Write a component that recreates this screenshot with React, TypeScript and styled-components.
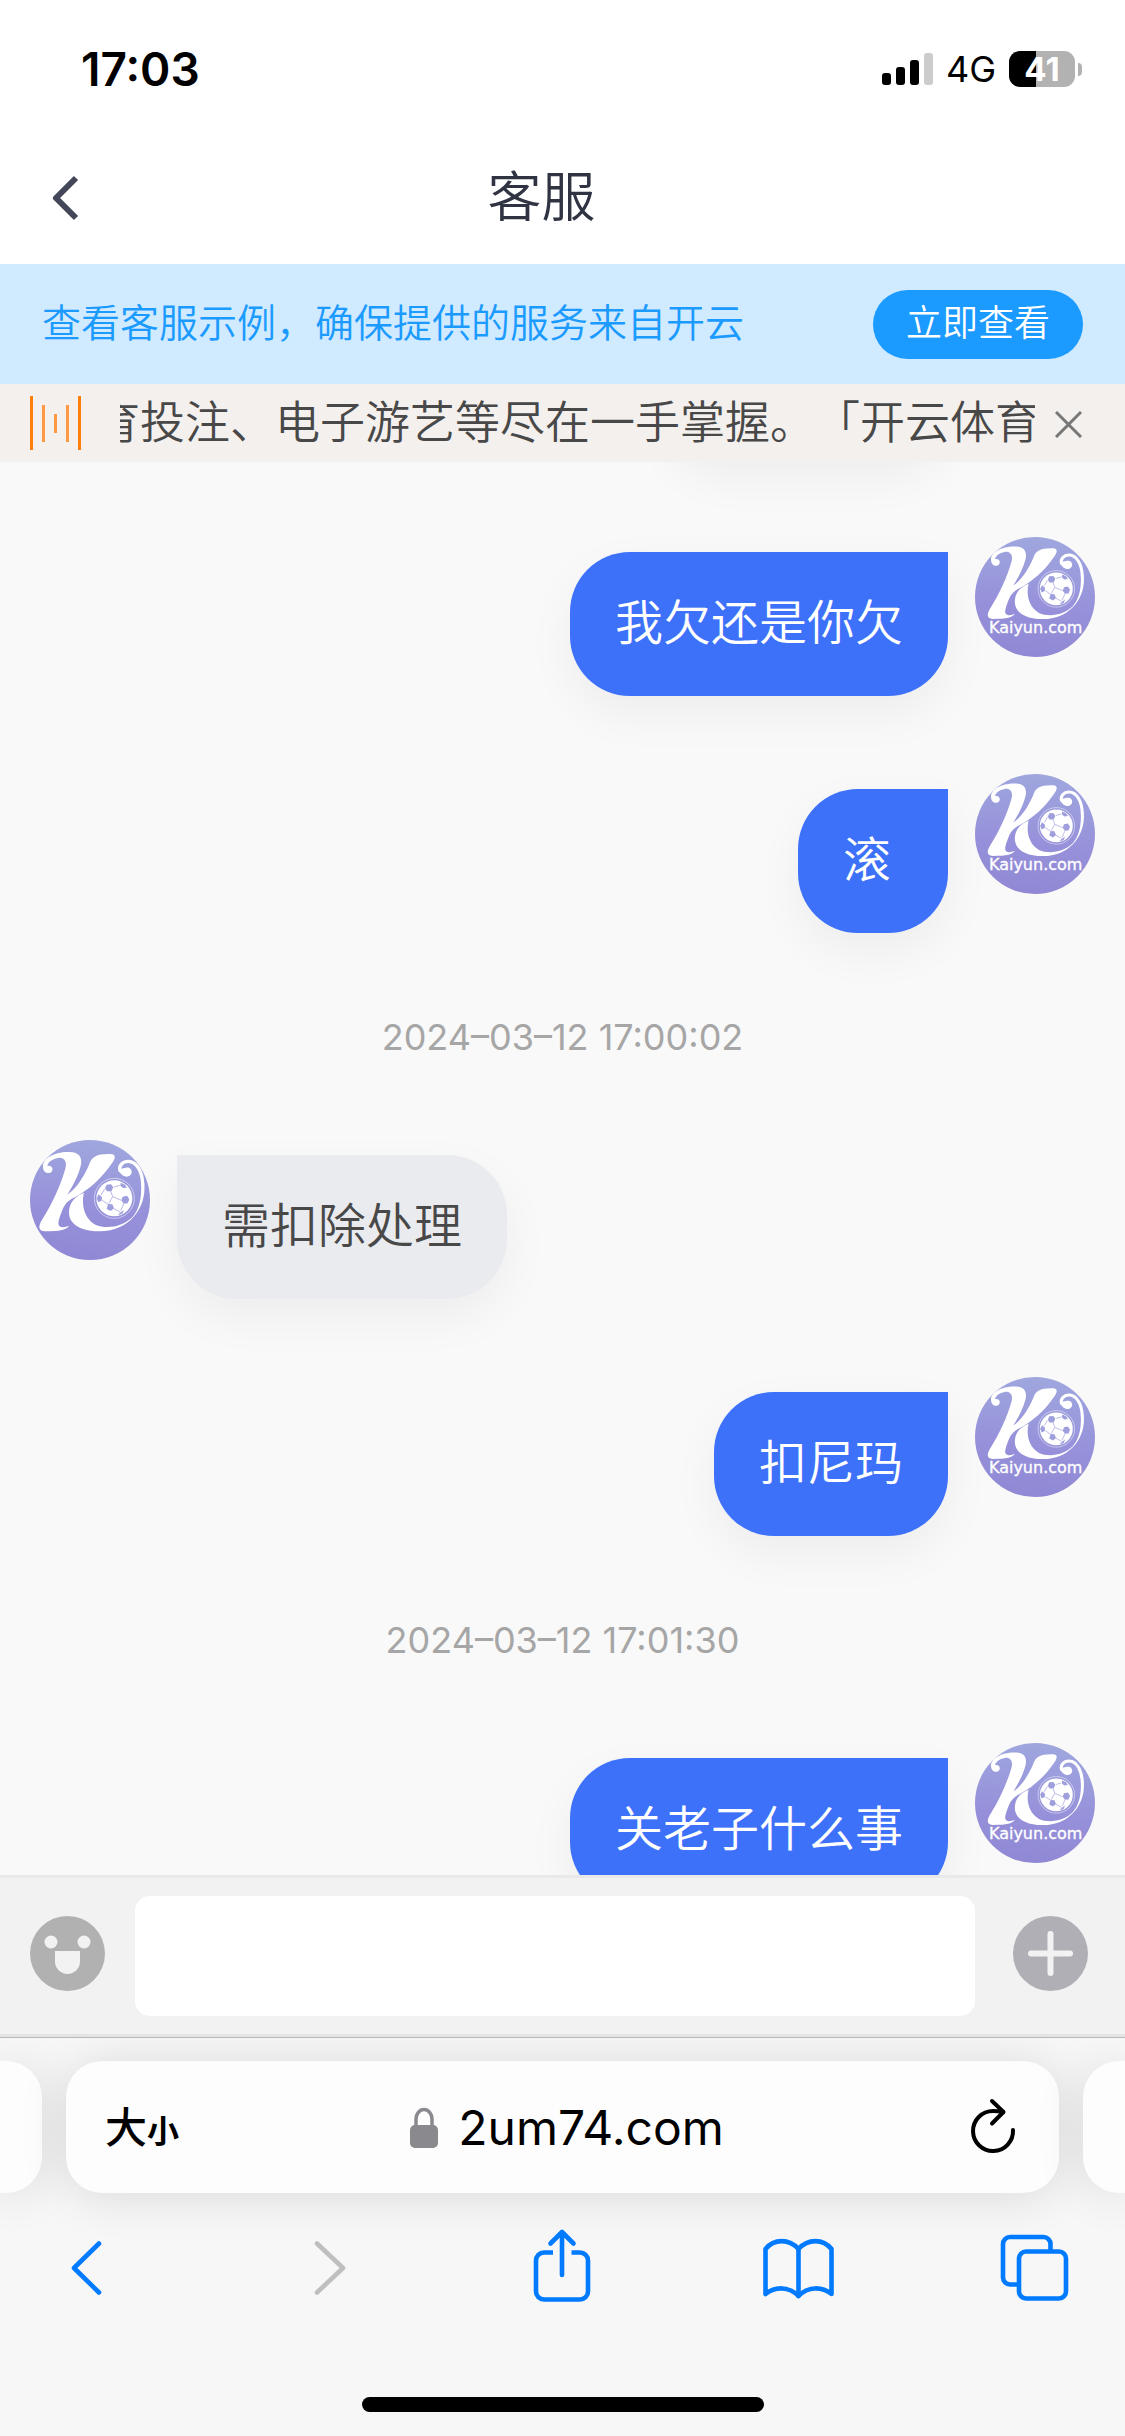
import React from 'react';
import styled, { createGlobalStyle } from 'styled-components';

const GlobalStyle = createGlobalStyle`
  * { box-sizing: border-box; }
  body {
    margin: 0;
    background: #f7f7f7;
    font-family: Inter, "Noto Sans CJK SC", sans-serif;
    text-spacing-trim: space-all;
  }
  button, input { font: inherit; color: inherit; }
  svg { display: block; flex: none; }
`;

const Screen = styled.div`
  display: flex;
  flex-direction: column;
  height: 100vh;
  overflow: hidden;
`;

const PlainButton = styled.button`
  display: flex;
  align-items: center;
  justify-content: center;
  padding: 0;
  border: 0;
  background: none;
  cursor: pointer;
`;

/* Status bar */

const StatusBar = styled.div`
  display: flex;
  justify-content: space-between;
  align-items: center;
  height: 132px;
  padding: 6px 43px 0 81px;
  background: #fff;
  color: #000;
`;

const Clock = styled.time`
  font-size: 46px;
  line-height: 60px;
  font-weight: 600;
`;

const StatusIcons = styled.div`
  display: flex;
  align-items: center;
  gap: 13px;
`;

const Network = styled.span`
  font-size: 36px;
  line-height: 48px;
`;

const Battery = styled.div`
  display: flex;
  align-items: center;
  gap: 3px;
`;

const BatteryBody = styled.div<{ $level: number }>`
  width: 66px;
  height: 36px;
  border-radius: 11px;
  background: linear-gradient(90deg, #000 ${(p) => p.$level}%, #b2b2b2 ${(p) => p.$level}%);
  color: #fff;
  font-size: 33px;
  line-height: 36px;
  font-weight: 700;
  text-align: center;
`;

const BatteryCap = styled.div`
  width: 4px;
  height: 13px;
  border-radius: 0 4px 4px 0;
  background: #b2b2b2;
`;

/* Page header */

const Header = styled.header`
  display: grid;
  grid-template-columns: 96px 1fr 138px;
  align-items: center;
  height: 132px;
  background: #fff;
  color: #2f3342;
`;

const BackButton = styled(PlainButton)`
  height: 96px;
  padding-left: 36px;
`;

const Title = styled.h1`
  margin: 0;
  text-align: center;
  font-size: 54px;
  line-height: 80px;
  font-weight: 350;
`;

/* Notices */

const ServiceNotice = styled.div`
  display: flex;
  align-items: center;
  justify-content: space-between;
  height: 120px;
  padding: 0 42px;
  background: #d0eaff;
  color: #1b9aff;
  font-size: 39px;
  line-height: 57px;
  font-weight: 350;
`;

const NoticeText = styled.span`
  padding-bottom: 4px;
`;

const ViewButton = styled.button`
  height: 69px;
  padding: 0 33px 2px;
  border: 0;
  border-radius: 35px;
  background: #1b9aff;
  color: #fff;
  font-size: 36px;
  line-height: 54px;
  cursor: pointer;
`;

const Ticker = styled.div`
  display: flex;
  align-items: center;
  height: 78px;
  padding: 0 30px;
  background: #f4f0ee;
  color: #484848;
`;

const TickerWindow = styled.div`
  display: flex;
  flex: 1;
  justify-content: flex-end;
  min-width: 0;
  margin-left: 39px;
  overflow: hidden;
`;

const TickerText = styled.span`
  flex: none;
  margin-right: -5px;
  white-space: nowrap;
  font-size: 45px;
  line-height: 66px;
  font-weight: 350;
`;

const CloseButton = styled(PlainButton)`
  width: 60px;
  height: 66px;
  padding: 3px 0 0 7px;
`;

/* Conversation */

const Chat = styled.main`
  flex: 1 1 0;
  min-height: 0;
  overflow: hidden;
  background: #f9f9f9;
`;

const Message = styled.div<{ $mine: boolean }>`
  display: flex;
  flex-direction: ${(p) => (p.$mine ? 'row-reverse' : 'row')};
  align-items: flex-start;
  gap: 27px;
  height: 237px;
  padding: 0 30px;
`;

const Bubble = styled.div<{ $mine: boolean }>`
  min-width: 150px;
  margin-top: 15px;
  padding: 35px 45px 37px;
  border-radius: ${(p) => (p.$mine ? '60px 0 60px 60px' : '0 60px 60px 60px')};
  background: ${(p) => (p.$mine ? '#3d71fa' : '#eaebef')};
  color: ${(p) => (p.$mine ? '#fff' : '#484848')};
  box-shadow: 0 18px 48px rgba(0, 0, 0, 0.05);
  font-size: 48px;
  line-height: 72px;
  font-weight: 350;
`;

const ScrolledBubble = styled(Bubble)`
  width: 282px;
  height: 144px;
  margin: -147px 177px 78px auto;
`;

const Timestamp = styled.time`
  display: block;
  height: 129px;
  text-align: center;
  color: #a6a6a6;
  font-size: 36px;
  line-height: 52px;
`;

/* Composer */

const Composer = styled.form`
  display: flex;
  align-items: center;
  padding: 18px 0;
  border-top: 3px solid #e9e9e9;
  border-bottom: 3px solid #e4e4e4;
  background: #f2f2f2;
`;

const ComposerButton = styled(PlainButton)<{ $wide?: boolean }>`
  width: ${(p) => (p.$wide ? 150 : 135)}px;
  height: 120px;
  padding-bottom: 6px;
`;

const MessageInput = styled.input`
  flex: 1;
  min-width: 0;
  height: 120px;
  padding: 0 30px;
  border: 0;
  border-radius: 15px;
  outline: 0;
  background: #fff;
  font-size: 48px;
`;

/* Browser controls */

const Browser = styled.footer`
  border-top: 1px solid #b9b9b9;
  background: #f7f7f7;
  overflow: hidden;
`;

const TabStrip = styled.div`
  display: flex;
  gap: 24px;
  padding-top: 23px;
`;

const NeighbourTab = styled.div<{ $side: 'left' | 'right' }>`
  width: 42px;
  border-radius: ${(p) => (p.$side === 'left' ? '0 36px 36px 0' : '36px 0 0 36px')};
  background: #fdfdfd;
  box-shadow: 0 3px 48px rgba(0, 0, 0, 0.12);
`;

const AddressBar = styled.div`
  display: grid;
  grid-template-columns: 1fr auto 1fr;
  align-items: center;
  flex: 1;
  height: 132px;
  padding: 0 39px;
  border-radius: 36px;
  background: #fdfdfd;
  box-shadow: 0 3px 48px rgba(0, 0, 0, 0.12);
  color: #000;
`;

const TextSizeButton = styled(PlainButton)`
  justify-self: start;
  align-items: baseline;
  padding-top: 6px;
  font-weight: 500;
  font-size: 42px;
  line-height: 60px;
`;

const SmallGlyph = styled.span`
  font-size: 32px;
  font-weight: 700;
`;

const Address = styled(PlainButton)`
  gap: 20px;
  padding: 2px 0 0 9px;
  font-size: 48px;
  line-height: 66px;
`;

const ReloadButton = styled(PlainButton)`
  justify-self: end;
`;

const Toolbar = styled.nav`
  display: flex;
  justify-content: space-between;
  padding: 27px 42px 0 39px;
  color: #007aff;
`;

const ToolButton = styled(PlainButton)`
  &:disabled {
    color: #bfbfbf;
  }
`;

const HomeIndicator = styled.div`
  width: 402px;
  height: 15px;
  margin: 81px auto 24px;
  border-radius: 8px;
  background: #000;
`;

const ToolIcon = ({ children }: { children: React.ReactNode }) => (
  <svg width="96" height="96" viewBox="0 0 96 96" fill="none" stroke="currentColor" strokeWidth="4.6" strokeLinecap="round" strokeLinejoin="round" aria-hidden="true">
    {children}
  </svg>
);

const BallPatches = () => (
  <g fill="#9f9fdd">
    <path d="M260 164L273 163L280 172L274 184L261 184L255 175Z" />
    <path d="M308 200L321 197L328 208L323 220L311 221L304 211Z" />
    <path d="M264 222L277 223L282 235L272 243L260 237Z" />
    <path d="M236 193L246 201L245 212L235 217L230 205Z" />
    <path d="M302 158L315 164L321 173L309 174L301 167Z" />
    <path d="M300 248L312 240L307 251L294 256Z" />
  </g>
);

const Avatar = ({ captioned }: { captioned: boolean }) => {
  const id = captioned ? 'avatar-captioned' : 'avatar-plain';
  return (
    <svg width="120" height="120" viewBox="30 30 360 360" role="img" aria-label="Kaiyun">
      <defs>
        <linearGradient id={id} x1="0.55" y1="0" x2="0.45" y2="1">
          <stop offset="0" stopColor="#9fa7de" />
          <stop offset="0.6" stopColor="#9690da" />
          <stop offset="1" stopColor="#9088d4" />
        </linearGradient>
      </defs>
      <circle cx="210" cy="210" r="180" fill={`url(#${id})`} />
      <g transform={captioned ? 'translate(15 -2) scale(0.915)' : undefined}>
        <path
          fill="#fff"
          d="M69 112C66 88 100 65 148 66C178 67 188 82 182 108C174 140 156 172 142 194C172 174 196 132 208 102C216 80 230 71 272 72C288 73 287 84 277 98C246 144 206 180 160 204C140 214 131 228 124 248C115 272 110 287 124 291C133 293 140 289 147 287C140 299 122 304 74 304C54 302 54 288 68 266C96 222 121 168 136 116C142 94 132 81 114 84C96 87 84 97 82 108C98 103 104 124 89 129C77 131 70 124 69 112Z"
        />
        <path
          fill="#fff"
          d="M192 188C185 216 188 262 226 284C258 298 306 292 337 262C357 240 366 204 363 160L373 160C380 236 326 304 240 304C186 305 146 284 147 246C148 216 166 198 192 188Z"
        />
        <path d="M368 162C367 126 350 94 325 94C306 94 296 109 300 122" fill="none" stroke="#fff" strokeWidth="10" strokeLinecap="round" />
        <path d="M318 113C328 111 336 118 335 127C334 138 323 142 314 139C304 136 298 128 296 118Z" fill="#fff" />
        <circle cx="283" cy="205" r="60" fill="none" stroke="#fff" strokeOpacity="0.5" strokeWidth="3" />
        <circle cx="283" cy="205" r="54" fill="#fff" />
        <BallPatches />
        <path d="M272 183L278 200L266 221M278 200L304 211M282 171L299 166M311 222L302 242M279 234L300 246M254 177L243 195M247 211L264 223" fill="none" stroke="#b9b8e8" strokeWidth="3" />
      </g>
      {captioned && (
        <text x="212" y="318" textAnchor="middle" fill="#fff" stroke="#fff" strokeWidth="1" fontFamily="'DejaVu Sans', sans-serif" fontSize="48">
          Kaiyun.com
        </text>
      )}
    </svg>
  );
};

type Entry = { kind: 'time' | 'mine' | 'theirs'; text: string };

const entries: Entry[] = [
  { kind: 'mine', text: '我欠还是你欠' },
  { kind: 'mine', text: '滚' },
  { kind: 'time', text: '2024–03–12 17:00:02' },
  { kind: 'theirs', text: '需扣除处理' },
  { kind: 'mine', text: '扣尼玛' },
  { kind: 'time', text: '2024–03–12 17:01:30' },
  { kind: 'mine', text: '关老子什么事' },
];

export default function App() {
  return (
    <Screen>
      <GlobalStyle />
      <StatusBar>
        <Clock>17:03</Clock>
        <StatusIcons>
          <svg width="51" height="33" viewBox="0 0 51 33" aria-hidden="true">
            <rect x="0" y="20" width="9" height="12" rx="3" />
            <rect x="14" y="14" width="9" height="18" rx="3" />
            <rect x="28" y="7" width="9" height="25" rx="3" />
            <rect x="42" y="0" width="9" height="32" rx="3" fill="#ccc" />
          </svg>
          <Network>4G</Network>
          <Battery>
            <BatteryBody $level={41}>41</BatteryBody>
            <BatteryCap />
          </Battery>
        </StatusIcons>
      </StatusBar>

      <Header>
        <BackButton aria-label="返回">
          <svg width="30" height="48" viewBox="0 0 30 48" fill="none" stroke="#434759" strokeWidth="6" strokeLinejoin="round" aria-hidden="true">
            <path d="M25 4L5 24L25 44" />
          </svg>
        </BackButton>
        <Title>客服</Title>
      </Header>

      <ServiceNotice>
        <NoticeText>查看客服示例，确保提供的服务来自开云</NoticeText>
        <ViewButton>立即查看</ViewButton>
      </ServiceNotice>

      <Ticker>
        <svg width="51" height="54" viewBox="0 0 51 54" fill="none" stroke="#ff7f0e" strokeWidth="3" aria-hidden="true">
          <path d="M1.5 0V54M49.5 0V54" />
          <path d="M13.5 9V46M37.5 9V46M25.5 18V37" stroke="#ff9a42" />
        </svg>
        <TickerWindow>
          <TickerText>育投注、电子游艺等尽在一手掌握。「开云体育</TickerText>
        </TickerWindow>
        <CloseButton aria-label="关闭">
          <svg width="27" height="27" viewBox="0 0 27 27" fill="none" stroke="#777" strokeWidth="3" aria-hidden="true">
            <path d="M1 1L26 26M26 1L1 26" />
          </svg>
        </CloseButton>
      </Ticker>

      <Chat>
        <ScrolledBubble $mine aria-hidden="true" />
        {entries.map((entry) =>
          entry.kind === 'time' ? (
            <Timestamp key={entry.text}>{entry.text}</Timestamp>
          ) : (
            <Message key={entry.text} $mine={entry.kind === 'mine'}>
              <Avatar captioned={entry.kind === 'mine'} />
              <Bubble $mine={entry.kind === 'mine'}>{entry.text}</Bubble>
            </Message>
          ),
        )}
      </Chat>

      <Composer onSubmit={(event) => event.preventDefault()}>
        <ComposerButton type="button" aria-label="表情">
          <svg width="75" height="75" viewBox="0 0 75 75" aria-hidden="true">
            <circle cx="37.5" cy="37.5" r="37.5" fill="#b1b1b2" />
            <g fill="#f2f2f2">
              <circle cx="21" cy="26" r="6.5" />
              <circle cx="54" cy="26" r="6.5" />
              <path d="M25 35H50V45.5A12.5 12.5 0 0 1 25 45.5Z" />
            </g>
          </svg>
        </ComposerButton>
        <MessageInput type="text" aria-label="消息" />
        <ComposerButton type="button" aria-label="更多" $wide>
          <svg width="75" height="75" viewBox="0 0 75 75" aria-hidden="true">
            <circle cx="37.5" cy="37.5" r="37.5" fill="#b0afb6" />
            <path d="M18 37.5H57M37.5 18V57" stroke="#f2f2f2" strokeWidth="6" strokeLinecap="round" />
          </svg>
        </ComposerButton>
      </Composer>

      <Browser>
        <TabStrip>
          <NeighbourTab $side="left" />
          <AddressBar>
            <TextSizeButton>
              <span>大</span>
              <SmallGlyph>小</SmallGlyph>
            </TextSizeButton>
            <Address>
              <svg width="28" height="42" viewBox="0 0 28 42" aria-hidden="true">
                <path d="M6 20V12A8 9.5 0 0 1 22 12V20" fill="none" stroke="#8a8a8e" strokeWidth="3.5" />
                <rect x="0" y="18" width="28" height="23" rx="5" fill="#8a8a8e" />
              </svg>
              <span>2um74.com</span>
            </Address>
            <ReloadButton aria-label="重新载入">
              <svg width="54" height="60" viewBox="0 0 54 60" fill="none" stroke="#000" strokeWidth="4" strokeLinecap="round" strokeLinejoin="round" aria-hidden="true">
                <path d="M47 33A20 20 0 1 1 27 14Q32 14 37 15" />
                <path d="M26 4L37.5 15L26 26.5" />
              </svg>
            </ReloadButton>
          </AddressBar>
          <NeighbourTab $side="right" />
        </TabStrip>
        <Toolbar>
          <ToolButton aria-label="后退">
            <ToolIcon><path d="M60 23.5L35 48L60 72.5" /></ToolIcon>
          </ToolButton>
          <ToolButton aria-label="前进" disabled>
            <ToolIcon><path d="M41 23.5L67 48L41 72.5" /></ToolIcon>
          </ToolButton>
          <ToolButton aria-label="分享">
            <ToolIcon>
              <path strokeLinecap="butt" d="M40 32.5H31A8 8 0 0 0 23 40.5V71.5A8 8 0 0 0 31 79.5H67A8 8 0 0 0 75 71.5V40.5A8 8 0 0 0 67 32.5H58.5" />
              <path d="M49 12V55M37.5 23.5L49 12L60.5 23.5" />
            </ToolIcon>
          </ToolButton>
          <ToolButton aria-label="书签">
            <ToolIcon>
              <path d="M15.5 29C24 18.5 39 18.5 48.5 29C58 18.5 73 18.5 81.5 29V74C72 66.5 58 66 48.5 76C39 66 25 66.5 15.5 74Z" />
              <path d="M48.5 29V76" />
            </ToolIcon>
          </ToolButton>
          <ToolButton aria-label="标签页">
            <ToolIcon>
              <rect x="32" y="31.5" width="47" height="47" rx="7" />
              <path strokeLinecap="butt" d="M63.5 31V24A7 7 0 0 0 56.5 17H23A7 7 0 0 0 16 24V57.5A7 7 0 0 0 23 64.5H31" />
            </ToolIcon>
          </ToolButton>
        </Toolbar>
        <HomeIndicator />
      </Browser>
    </Screen>
  );
}
